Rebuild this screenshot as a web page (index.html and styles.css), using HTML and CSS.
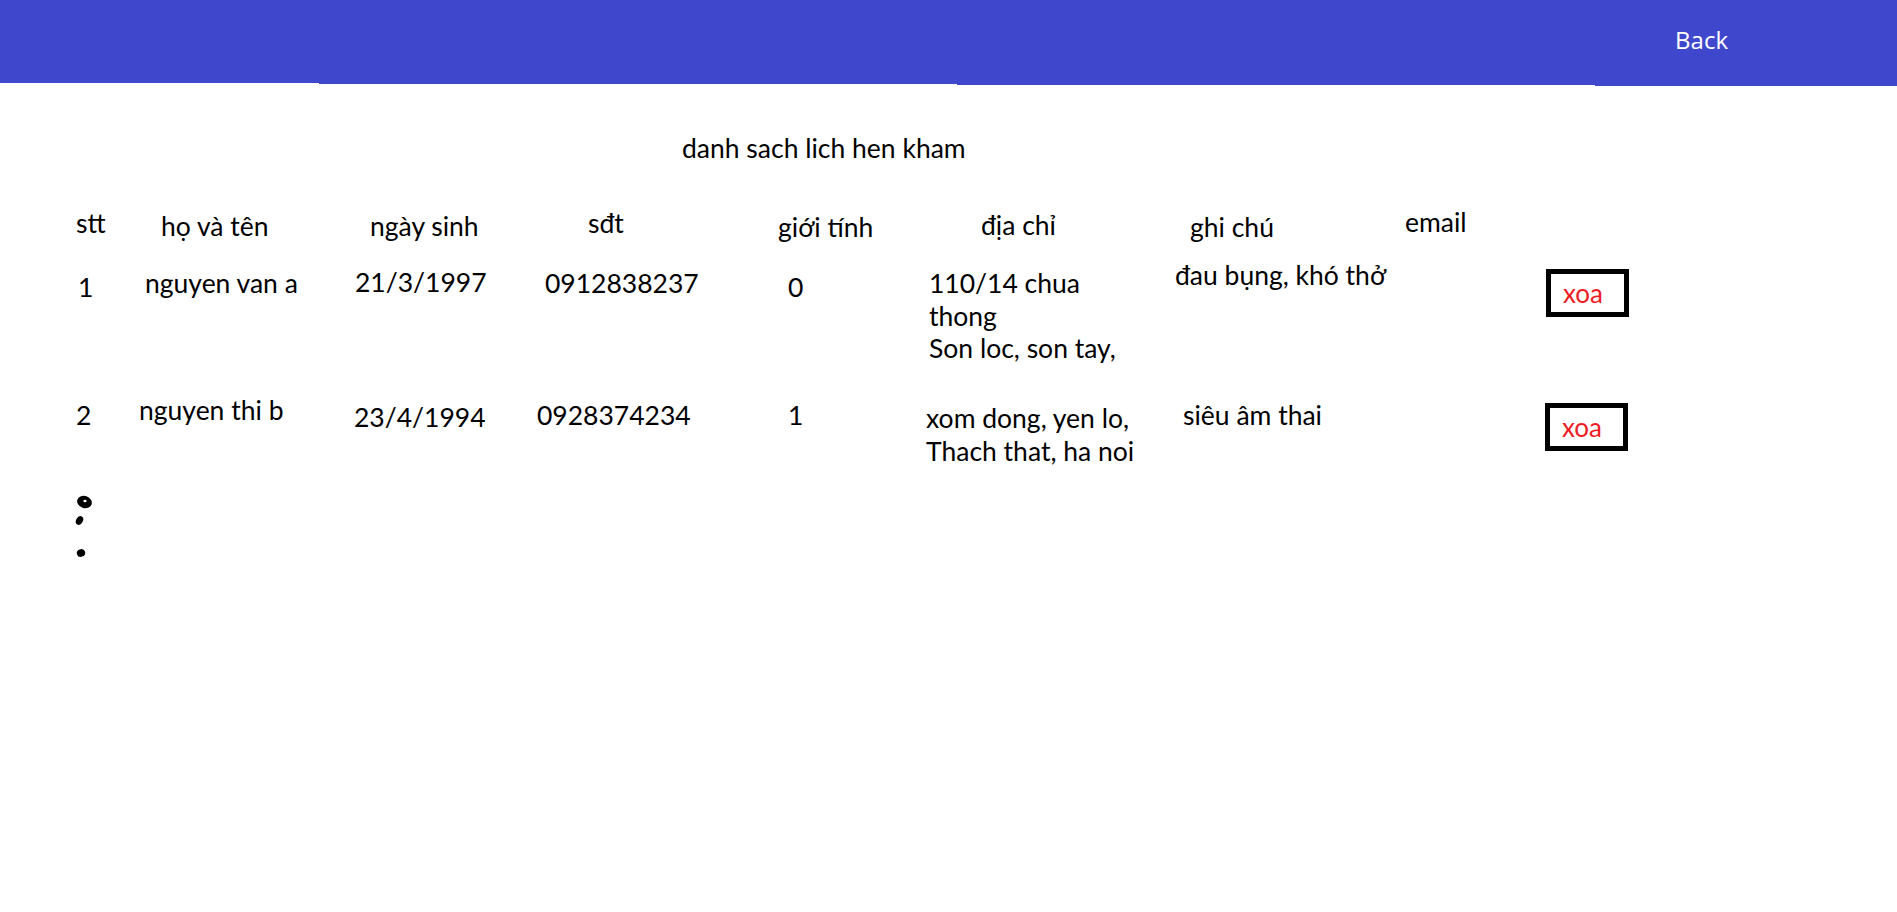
FILE: index.html
```html
<!DOCTYPE html>
<html lang="vi">
<head>
<meta charset="utf-8">
<title>danh sach lich hen kham</title>
<link rel="stylesheet" href="styles.css">
</head>
<body>
<header class="topbar">
  <a class="back" href="#">Back</a>
</header>
<div class="topbar-edge">
  <span class="seg seg0"></span><span class="seg seg1"></span><span class="seg seg2"></span><span class="seg seg3"></span>
</div>
<main class="content">
  <h1 class="title">danh sach lich hen kham</h1>
  <div class="table">
    <div class="cell h-stt">stt</div>
    <div class="cell h-name">họ và tên</div>
    <div class="cell h-dob">ngày sinh</div>
    <div class="cell h-phone">sđt</div>
    <div class="cell h-gender">giới tính</div>
    <div class="cell h-addr">địa chỉ</div>
    <div class="cell h-note">ghi chú</div>
    <div class="cell h-email">email</div>
    <div class="cell"></div>

    <div class="cell r1-stt">1</div>
    <div class="cell r1-name">nguyen van a</div>
    <div class="cell r1-dob">21/3/1997</div>
    <div class="cell r1-phone">0912838237</div>
    <div class="cell r1-gender">0</div>
    <div class="cell r1-addr">110/14 chua<br>thong<br>Son loc, son tay,</div>
    <div class="cell r1-note">đau bụng, khó thở</div>
    <div class="cell"></div>
    <div class="cell"><button class="del r1-del">xoa</button></div>

    <div class="cell r2-stt">2</div>
    <div class="cell r2-name">nguyen thi b</div>
    <div class="cell r2-dob">23/4/1994</div>
    <div class="cell r2-phone">0928374234</div>
    <div class="cell r2-gender">1</div>
    <div class="cell r2-addr">xom dong, yen lo,<br>Thach that, ha noi</div>
    <div class="cell r2-note">siêu âm thai</div>
    <div class="cell"></div>
    <div class="cell"><button class="del r2-del">xoa</button></div>
  </div>
  <svg class="more" width="24" height="70" viewBox="0 0 24 70" aria-hidden="true">
    <ellipse cx="10.5" cy="9" rx="7.5" ry="6" transform="rotate(20 10.5 9)" fill="#000"/>
    <ellipse cx="11" cy="8" rx="1.6" ry="1.2" fill="#fff"/>
    <ellipse cx="5.5" cy="27.5" rx="3.3" ry="4.6" transform="rotate(30 5.5 27.5)" fill="#000"/>
    <ellipse cx="7" cy="60" rx="4.2" ry="3.8" transform="rotate(-20 7 60)" fill="#000"/>
  </svg>
</main>
</body>
</html>
```

FILE: styles.css
```css
* { box-sizing: border-box; }

body {
  margin: 0;
  font-family: Lato, "Open Sans", sans-serif;
  color: #000;
  background: #fff;
}

.topbar {
  height: 83px;
  background: #3f48cc;
  display: flex;
  justify-content: flex-end;
  align-items: flex-start;
  padding-right: 169px;
}

.back {
  font-family: "Open Sans", "Noto Sans", sans-serif;
  font-size: 24px;
  line-height: 30px;
  padding-top: 25px;
  color: #fff;
  text-decoration: none;
}

.topbar-edge {
  display: flex;
  align-items: flex-start;
  height: 3px;
}
.seg { display: block; background: #3f48cc; }
.seg0 { width: 319px; height: 0; }
.seg1 { width: 638px; height: 1px; }
.seg2 { width: 638px; height: 2px; }
.seg3 { flex: 1; height: 3px; }

.content {
  padding-top: 46px;
}

.title {
  margin: 0;
  padding-left: 682px;
  font-size: 26.5px;
  font-weight: 400;
  line-height: 33px;
}

.table {
  margin-top: 42px;
  padding-left: 76px;
  display: grid;
  grid-template-columns: 66px 212px 186px 248px 139px 251px 227px 141px 1fr;
  grid-template-rows: 60px 132px auto;
  align-items: start;
  font-size: 26.5px;
  line-height: 33px;
}

.cell { white-space: nowrap; }

/* header nudges */
.h-name { margin-left: 19px; margin-top: 3px; }
.h-dob { margin-left: 16px; margin-top: 3px; }
.h-phone { margin-left: 48px; }
.h-gender { margin-left: -10px; margin-top: 4px; }
.h-addr { margin-left: 54px; margin-top: 2px; }
.h-note { margin-left: 12px; margin-top: 4px; }
.h-email { margin-top: -1px; }

/* row 1 */
.r1-stt { margin-left: 2px; margin-top: 4px; }
.r1-name { margin-left: 3px; }
.r1-dob { margin-left: 1px; margin-top: -1px; }
.r1-phone { margin-left: 5px; }
.r1-gender { margin-top: 4px; }
.r1-addr { margin-left: 2px; line-height: 32.5px; }
.r1-note { margin-left: -3px; margin-top: -8px; }

/* row 2 */
.r2-name { margin-left: -3px; margin-top: -5px; }
.r2-dob { margin-top: 2px; }
.r2-phone { margin-left: -3px; }
.r2-addr { margin-left: -1px; margin-top: 3px; }
.r2-note { margin-left: 5px; }

.del {
  display: block;
  width: 83px;
  height: 48px;
  border: 5px solid #000;
  background: #fff;
  padding: 0 0 0 12px;
  text-align: left;
  font-family: Lato, "Open Sans", sans-serif;
  font-size: 26px;
  line-height: 36px;
  color: #ed1c24;
  cursor: pointer;
}
.r1-del { margin-top: 2px; }
.r2-del { margin-top: 4px; margin-left: -1px; }

.more {
  display: block;
  margin-top: 25px;
  margin-left: 74px;
}
```
